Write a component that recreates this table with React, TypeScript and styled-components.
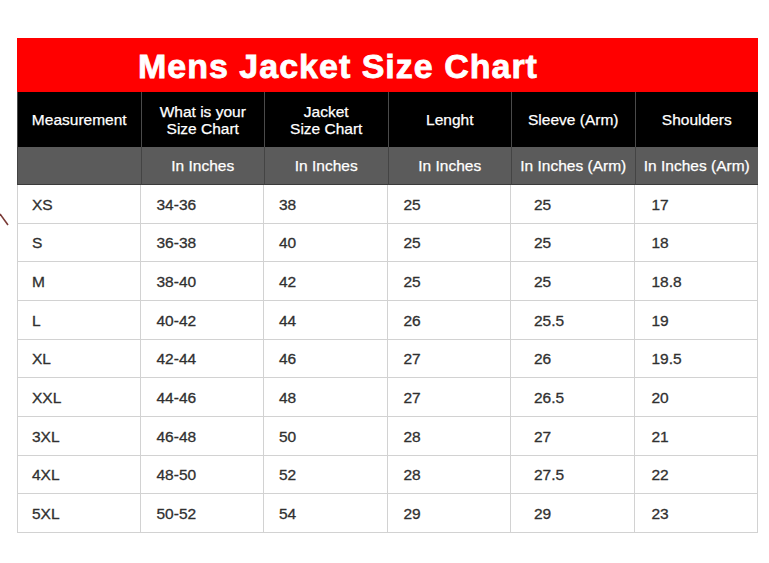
import styled, { createGlobalStyle } from 'styled-components';

const GlobalStyle = createGlobalStyle`
  html, body {
    margin: 0;
    padding: 0;
    background: #ffffff;
  }
  body {
    font-family: 'Liberation Sans', Arial, sans-serif;
  }
`;

const Page = styled.div`
  position: relative;
  width: 769px;
  height: 563px;
  padding: 38px 0 0 17px;
  box-sizing: border-box;
`;

const Chart = styled.div`
  width: 741px;
  display: grid;
  grid-template-columns: repeat(6, 1fr);
`;

const Title = styled.div`
  grid-column: 1 / -1;
  height: 54px;
  line-height: 56px;
  background: #ff0000;
  color: #ffffff;
  font-size: 34px;
  font-weight: bold;
  letter-spacing: 1px;
  -webkit-text-stroke: 0.8px #ffffff;
  padding-left: 121px;
  white-space: nowrap;
`;

const HeadCell = styled.div`
  height: 55px;
  background: #000000;
  color: #ffffff;
  font-size: 15.5px;
  line-height: 17px;
  display: flex;
  align-items: center;
  justify-content: center;
  text-align: center;
  -webkit-text-stroke: 0.25px #ffffff;
  border-left: 1px solid #4a4a4a;
  box-sizing: border-box;
  &:first-of-type {
    border-left: none;
  }
`;

const UnitCell = styled.div`
  height: 38px;
  background: #5b5b5b;
  color: #ffffff;
  font-size: 15.5px;
  display: flex;
  align-items: center;
  justify-content: center;
  white-space: nowrap;
  -webkit-text-stroke: 0.25px #ffffff;
  border-left: 1px solid #444444;
  border-bottom: 1px solid #3a3a3a;
  box-sizing: border-box;
`;

const Cell = styled.div<{ $pad: number; $first: boolean }>`
  height: 38.67px;
  display: flex;
  align-items: center;
  padding: 2px 0 0 ${(p) => p.$pad}px;
  font-size: 15.5px;
  color: #303030;
  -webkit-text-stroke: 0.3px #303030;
  border-right: 1px solid #d2d2d2;
  border-bottom: 1px solid #d2d2d2;
  border-left: ${(p) => (p.$first ? '1px solid #d2d2d2' : 'none')};
  box-sizing: border-box;
`;

const Arrow = styled.svg`
  position: absolute;
  left: 0;
  top: 208px;
`;

const heads = [
  ['Measurement'],
  ['What is your', 'Size Chart'],
  ['Jacket', 'Size Chart'],
  ['Lenght'],
  ['Sleeve (Arm)'],
  ['Shoulders'],
];

const units = ['', 'In Inches', 'In Inches', 'In Inches', 'In Inches (Arm)', 'In Inches (Arm)'];

// left padding per column, taken from the reference
const pads = [14, 16, 15, 16, 23, 17];

const rows = [
  ['XS', '34-36', '38', '25', '25', '17'],
  ['S', '36-38', '40', '25', '25', '18'],
  ['M', '38-40', '42', '25', '25', '18.8'],
  ['L', '40-42', '44', '26', '25.5', '19'],
  ['XL', '42-44', '46', '27', '26', '19.5'],
  ['XXL', '44-46', '48', '27', '26.5', '20'],
  ['3XL', '46-48', '50', '28', '27', '21'],
  ['4XL', '48-50', '52', '28', '27.5', '22'],
  ['5XL', '50-52', '54', '29', '29', '23'],
];

const App = () => {
  return (
    <>
      <GlobalStyle />
      <Page>
        <Arrow width="12" height="22" viewBox="0 0 12 22">
          <path d="M0 6 L8 17" stroke="#7a3a36" strokeWidth="1.6" fill="none" />
        </Arrow>
        <Chart>
          <Title>Mens Jacket Size Chart</Title>
          {heads.map((h, i) => (
            <HeadCell key={'h' + i}>
              <div>
                {h.map((line) => (
                  <div key={line}>{line}</div>
                ))}
              </div>
            </HeadCell>
          ))}
          {units.map((u, i) => (
            <UnitCell key={'u' + i}>{u}</UnitCell>
          ))}
          {rows.map((row) =>
            row.map((val, i) => (
              <Cell key={row[0] + i} $pad={pads[i]} $first={i === 0}>
                {val}
              </Cell>
            ))
          )}
        </Chart>
      </Page>
    </>
  );
};

export default App;
